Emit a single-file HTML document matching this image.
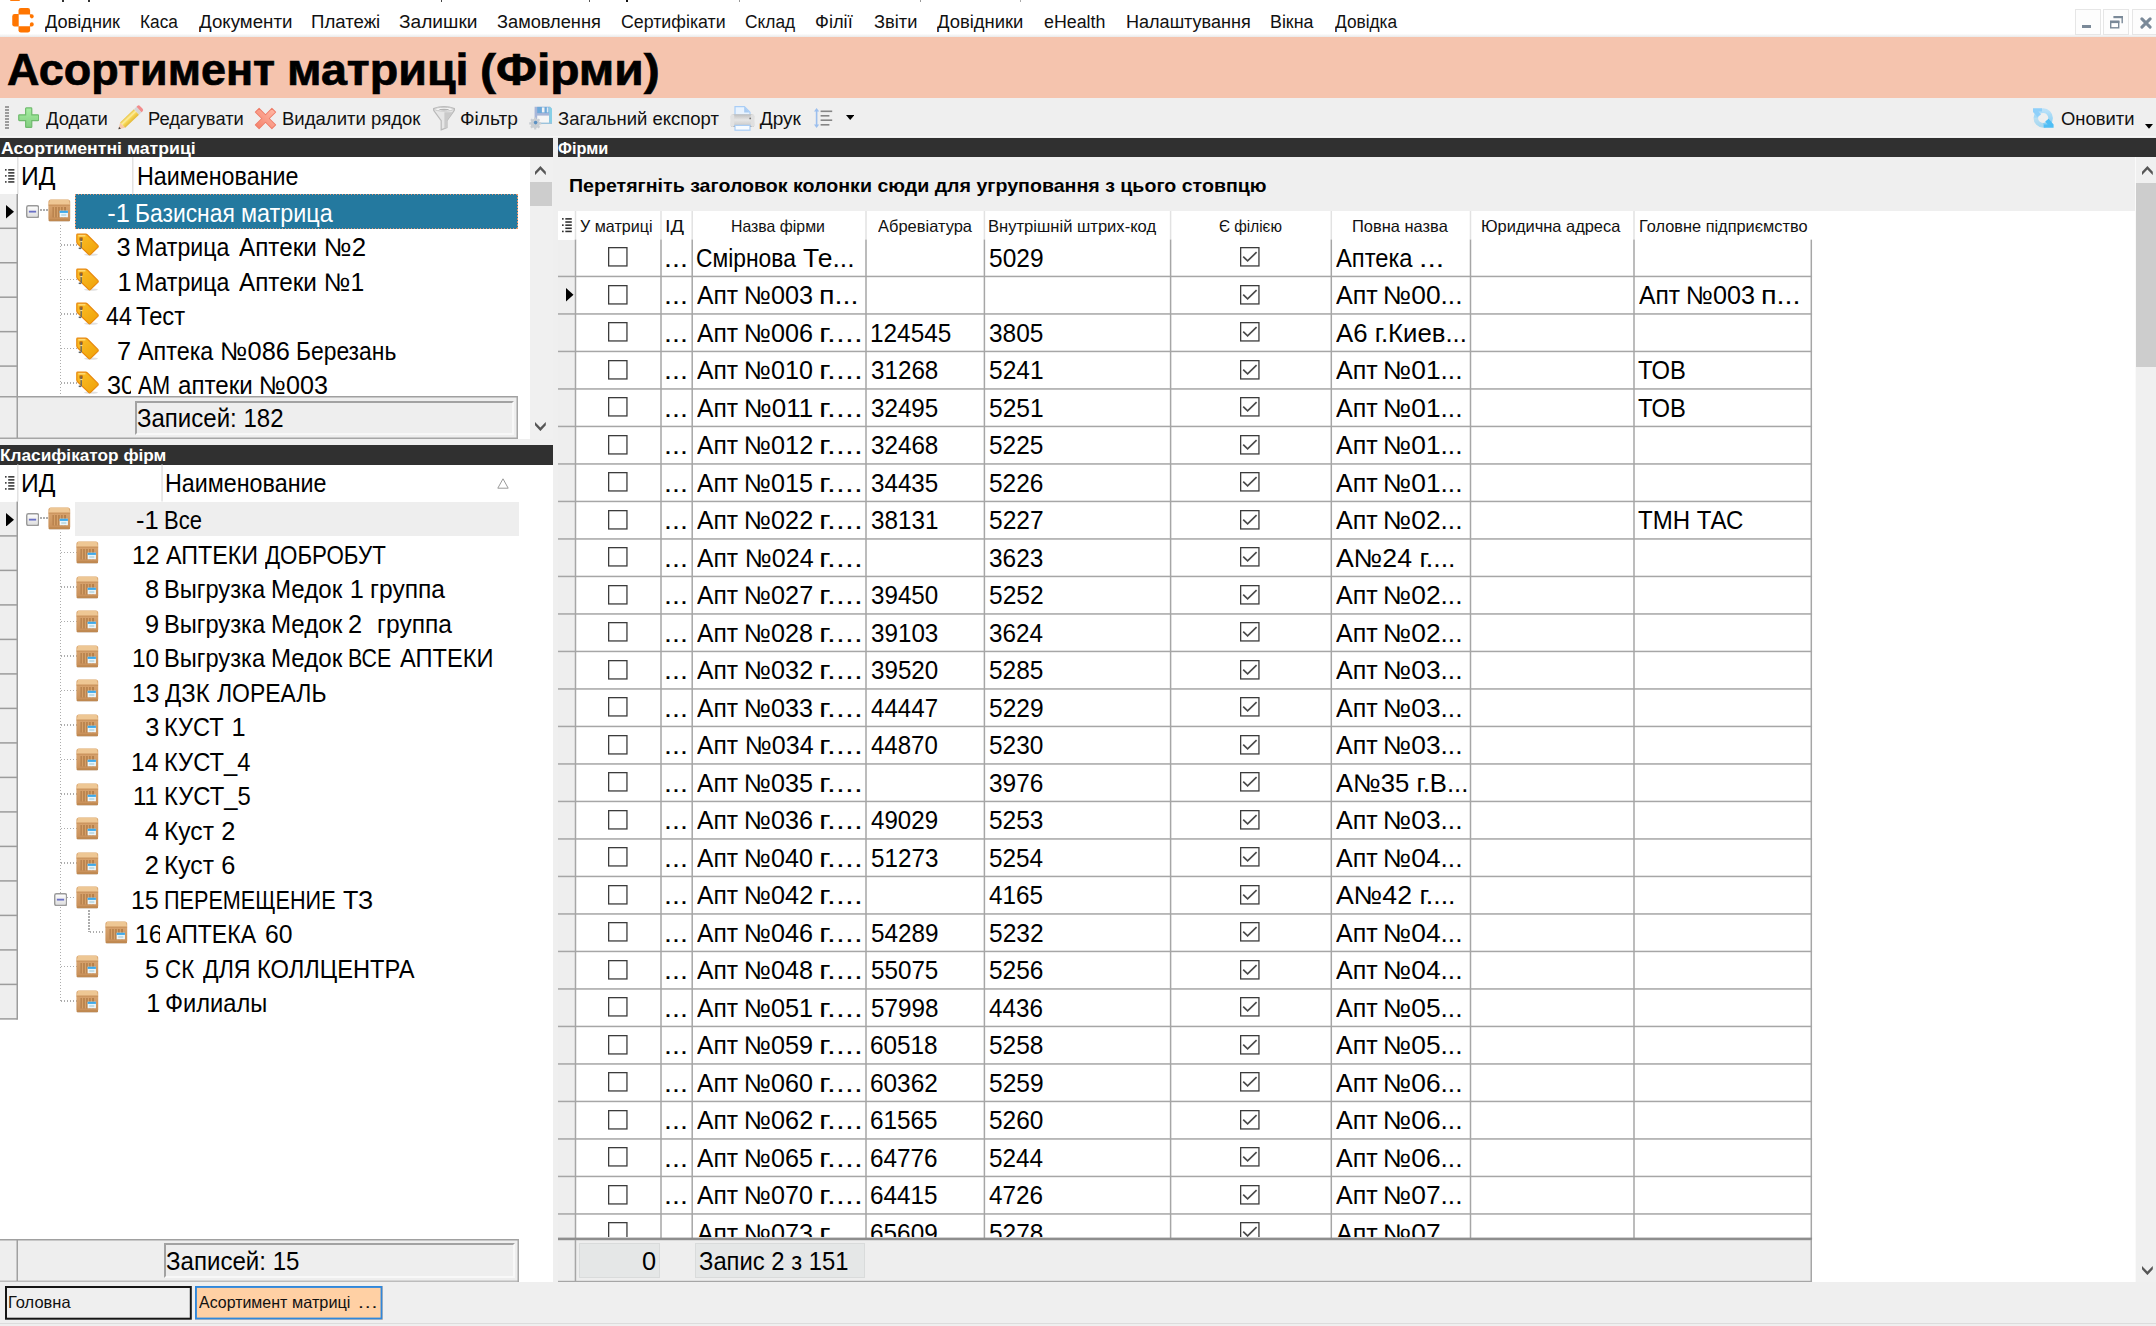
<!DOCTYPE html>
<html lang="uk"><head><meta charset="utf-8"><title>Асортимент матриці (Фірми)</title>
<style>
html,body{margin:0;padding:0}
html{overflow:hidden;width:2156px;height:1326px}
body{width:2156px;height:1326px;overflow:hidden;background:#efefef;position:relative;font-family:"Liberation Sans",sans-serif;}
.b{position:absolute;display:block}
.t{position:absolute;white-space:pre;line-height:1;display:block;transform-origin:0 0}
.c{position:absolute;overflow:hidden;display:block}
</style></head><body>
<svg width="0" height="0" style="position:absolute"><defs>
<linearGradient id="gcr" x1="0" y1="0" x2="0" y2="1"><stop offset="0" stop-color="#dcaa76"/><stop offset="1" stop-color="#c88f58"/></linearGradient>
<linearGradient id="gtag" x1="0" y1="0" x2="1" y2="1"><stop offset="0" stop-color="#fcc02a"/><stop offset="1" stop-color="#eea006"/></linearGradient>
<linearGradient id="gexp" x1="0" y1="0" x2="0" y2="1"><stop offset="0" stop-color="#ffffff"/><stop offset="1" stop-color="#dcdcdc"/></linearGradient>
<linearGradient id="gplus" x1="0" y1="0" x2="0" y2="1"><stop offset="0" stop-color="#a6efa2"/><stop offset="1" stop-color="#82cd80"/></linearGradient>
<linearGradient id="gx" x1="0" y1="0" x2="0" y2="1"><stop offset="0" stop-color="#ffb5a2"/><stop offset="1" stop-color="#f5856f"/></linearGradient>
<linearGradient id="gpr" x1="0" y1="0" x2="0" y2="1"><stop offset="0" stop-color="#bdbdbd"/><stop offset="0.45" stop-color="#e6e6e6"/><stop offset="0.8" stop-color="#d0d0d0"/><stop offset="1" stop-color="#8a8a8a"/></linearGradient>
<linearGradient id="gpen" x1="0" y1="0" x2="0" y2="1"><stop offset="0" stop-color="#e9c33c"/><stop offset="0.35" stop-color="#fdeea0"/><stop offset="0.55" stop-color="#f8d654"/><stop offset="1" stop-color="#e2b838"/></linearGradient>
<linearGradient id="gref" x1="0" y1="0" x2="0" y2="1"><stop offset="0" stop-color="#a9dcfb"/><stop offset="1" stop-color="#5ec2f4"/></linearGradient>
<symbol id="crate" viewBox="0 0 23 23">
 <rect x="1" y="20.6" width="21" height="2.4" rx="1.2" fill="#000" opacity="0.10"/>
 <rect x="0.4" y="0.3" width="22.2" height="22" rx="2.6" fill="url(#gcr)"/>
 <path d="M2.2,0.6 H20.8 L22.4,5.6 H0.6 Z" fill="#eec794"/>
 <rect x="0.6" y="5.6" width="21.8" height="1.1" fill="#c9925b"/>
 <rect x="4.6" y="8" width="13.6" height="10.6" fill="#b37d49"/>
 <path d="M6.6,8 V18.6 M9.6,8 V18.6 M12.6,8 V18.6 M15.6,8 V18.6" stroke="#d6a067" stroke-width="1.5"/>
 <rect x="0.6" y="20.4" width="21.8" height="2" rx="1" fill="#bf8850"/>
 <rect x="11.8" y="11.8" width="8.4" height="6.6" fill="#eef7fb"/>
 <rect x="11.8" y="11.8" width="8.4" height="2.2" fill="#3ea9ea"/>
 <rect x="13.4" y="15" width="5.2" height="2.2" fill="#c3dde6"/>
</symbol>
<symbol id="tag" viewBox="0 0 23 23">
 <ellipse cx="15" cy="21.6" rx="7" ry="1.2" fill="#000" opacity="0.12"/>
 <path d="M1.6,1.2 H9.6 Q10.6,1.2 11.4,2 L21.8,12.4 Q22.6,13.4 21.8,14.4 L14.6,21.4 Q13.6,22.2 12.6,21.4 L1.8,11 Q0.8,10 0.8,9 V2 Q0.8,1.2 1.6,1.2 Z" fill="url(#gtag)" stroke="#e8880c" stroke-width="1.2"/>
 <path d="M2.4,2.8 H9.4" stroke="#ffe08a" stroke-width="1.2"/>
 <rect x="3.4" y="4.2" width="3.4" height="3.6" rx="0.8" fill="#b96a10"/>
 <path d="M5.2,5.4 V14.6 Q4.4,16.4 2.8,14.8" fill="none" stroke="#5d6468" stroke-width="1.3"/>
 <path d="M4.3,8.6 H6.4" stroke="#ffe9a8" stroke-width="1"/>
</symbol>
<symbol id="exp" viewBox="0 0 13.9 13.9">
 <rect x="0.75" y="0.75" width="12.4" height="12.4" rx="1.8" fill="url(#gexp)" stroke="#9a9a9a" stroke-width="1.5"/>
 <rect x="3" y="6" width="7.6" height="1.9" fill="#6a70c4"/>
</symbol>
<symbol id="cb0" viewBox="0 0 20 20">
 <rect x="0.65" y="0.65" width="18.3" height="18.3" fill="#fff" stroke="#3c3c3c" stroke-width="1.3"/>
</symbol>
<symbol id="cb1" viewBox="0 0 20 20">
 <rect x="0.65" y="0.65" width="18.3" height="18.3" fill="#fff" stroke="#3c3c3c" stroke-width="1.3"/>
 <path d="M3.2,9.6 L7.6,13.9 L16.6,5.2" fill="none" stroke="#4a4a4a" stroke-width="1.7"/>
</symbol>
</defs></svg>
<div class="b" style="left:0px;top:0px;width:2156px;height:34px;background:#fff;"></div>
<div class="b" style="left:0px;top:33.5px;width:2156px;height:3.5px;background:linear-gradient(#fdfdfd,#e9e9e9);"></div>
<div class="b" style="left:10px;top:0px;width:10px;height:1px;background:#ff7a0a;border-radius:0 0 3px 3px;"></div>
<div class="b" style="left:62.3px;top:0px;width:1.6px;height:1.6px;background:#333;"></div>
<div class="b" style="left:88.3px;top:0px;width:1.6px;height:1.6px;background:#333;"></div>
<div class="b" style="left:440.6px;top:0px;width:1.6px;height:1.6px;background:#444;"></div>
<div class="b" style="left:588.6px;top:0px;width:1.6px;height:1.6px;background:#555;"></div>
<div class="b" style="left:625.6px;top:0px;width:2.6px;height:1.6px;background:#111;"></div>
<div class="b" style="left:739px;top:0px;width:1.4px;height:1.6px;background:#999;"></div>
<div class="b" style="left:920px;top:0px;width:1.4px;height:1.6px;background:#999;"></div>
<div class="b" style="left:1020px;top:0px;width:1.4px;height:1.6px;background:#aaa;"></div>
<svg class="b" style="left:11.5px;top:8px" width="22" height="25" viewBox="0 0 22 25"><g fill="#ff7500"><path d="M6.5,6.4 V2.4 Q6.5,0.1 8.8,0.1 H15.8 Q18.1,0.1 18.1,2.4 V6.4 Z"/><path d="M6.5,18.3 V22.3 Q6.5,24.6 8.8,24.6 H15.8 Q18.1,24.6 18.1,22.3 V18.3 Z"/><path d="M6.7,6.1 H2.6 Q0.25,6.1 0.25,8.4 V16.3 Q0.25,18.6 2.6,18.6 H6.7 Z"/><path d="M17.9,6.3 H19.8 Q21.7,6.3 21.7,8.2 V8.6 Q21.7,10.4 19.9,10.4 Q18,10.4 17.9,8.6 Z"/><path d="M17.9,18.4 H19.8 Q21.7,18.4 21.7,16.5 V16.1 Q21.7,14.3 19.9,14.3 Q18,14.3 17.9,16.1 Z"/></g></svg>
<span class="t" id="t0" style="left:44.87px;top:12px;font-size:19.026px;transform:scaleX(0.9554);color:#111;">Довідник</span>
<span class="t" id="t1" style="left:140.08px;top:12px;font-size:19.026px;transform:scaleX(0.9082);color:#111;">Каса</span>
<span class="t" id="t2" style="left:198.86px;top:12px;font-size:19.026px;transform:scaleX(0.9837);color:#111;">Документи</span>
<span class="t" id="t3" style="left:310.99px;top:12px;font-size:19.026px;transform:scaleX(0.9792);color:#111;">Платежі</span>
<span class="t" id="t4" style="left:399.37px;top:12px;font-size:19.026px;transform:scaleX(1.0060);color:#111;">Залишки</span>
<span class="t" id="t5" style="left:496.90px;top:12px;font-size:19.026px;transform:scaleX(0.9585);color:#111;">Замовлення</span>
<span class="t" id="t6" style="left:620.60px;top:12px;font-size:19.026px;transform:scaleX(0.9350);color:#111;">Сертифікати</span>
<span class="t" id="t7" style="left:745.12px;top:12px;font-size:19.026px;transform:scaleX(0.9115);color:#111;">Склад</span>
<span class="t" id="t8" style="left:815.45px;top:12px;font-size:19.026px;transform:scaleX(0.9602);color:#111;">Філії</span>
<span class="t" id="t9" style="left:874.40px;top:12px;font-size:19.026px;transform:scaleX(0.9603);color:#111;">Звіти</span>
<span class="t" id="t10" style="left:937.36px;top:12px;font-size:19.026px;transform:scaleX(0.9692);color:#111;">Довідники</span>
<span class="t" id="t11" style="left:1044.24px;top:12px;font-size:19.026px;transform:scaleX(0.9370);color:#111;">eHealth</span>
<span class="t" id="t12" style="left:1125.52px;top:12px;font-size:19.026px;transform:scaleX(0.9490);color:#111;">Налаштування</span>
<span class="t" id="t13" style="left:1269.54px;top:12px;font-size:19.026px;transform:scaleX(0.9385);color:#111;">Вікна</span>
<span class="t" id="t14" style="left:1334.87px;top:12px;font-size:19.026px;transform:scaleX(0.9082);color:#111;">Довідка</span>
<div class="b" style="left:2075px;top:9px;width:25.6px;height:25.5px;background:#fdfdfd;box-sizing:border-box;border:1.3px solid #e6e6e6;"></div>
<div class="b" style="left:2103.4px;top:9px;width:25.6px;height:25.5px;background:#fdfdfd;box-sizing:border-box;border:1.3px solid #e6e6e6;"></div>
<div class="b" style="left:2132px;top:9px;width:24px;height:25.5px;background:#fdfdfd;box-sizing:border-box;border:1.3px solid #e6e6e6;border-right:none;"></div>
<div class="b" style="left:2082px;top:25px;width:9px;height:2.8px;background:#7a8998;"></div>
<svg class="b" style="left:2110px;top:15.6px" width="13" height="13" viewBox="0 0 13 13"><path d="M4,0.6 H12.2 V7.2" fill="none" stroke="#7a8998" stroke-width="1.4"/><rect x="3.4" y="0" width="9.5" height="2.2" fill="#7a8998"/><rect x="0.7" y="5.4" width="8" height="6.4" fill="#fff" stroke="#7a8998" stroke-width="1.4"/><rect x="0" y="4.7" width="9.4" height="2.4" fill="#7a8998"/></svg>
<svg class="b" style="left:2139.5px;top:16.5px" width="12" height="12" viewBox="0 0 12 12"><path d="M1.9,1.9 L10.1,10.1 M10.1,1.9 L1.9,10.1" stroke="#7a8998" stroke-width="3" stroke-linecap="round"/></svg>
<div class="b" style="left:0px;top:37px;width:2156px;height:61px;background:#f5c4ae;"></div>
<span class="t" id="t15" style="left:6.68px;top:47px;font-size:44.8px;transform:scaleX(1.0027);font-weight:bold;-webkit-text-stroke:0.7px #000;">Асортимент</span>
<span class="t" id="t16" style="left:286.74px;top:47px;font-size:44.8px;transform:scaleX(1.0417);font-weight:bold;-webkit-text-stroke:0.7px #000;">матриці</span>
<span class="t" id="t17" style="left:480.11px;top:47px;font-size:44.8px;transform:scaleX(1.0703);font-weight:bold;-webkit-text-stroke:0.7px #000;">(Фірми)</span>
<div class="b" style="left:0px;top:98px;width:2156px;height:40px;background:#efefef;"></div>
<div class="b" style="left:0px;top:136px;width:2156px;height:1px;background:#f6f6f6;"></div>
<div class="b" style="left:4.5px;top:106px;width:4.5px;height:1.5px;background:#9c9c9c;"></div>
<div class="b" style="left:4.5px;top:109px;width:4.5px;height:1.5px;background:#9c9c9c;"></div>
<div class="b" style="left:4.5px;top:112px;width:4.5px;height:1.5px;background:#9c9c9c;"></div>
<div class="b" style="left:4.5px;top:115px;width:4.5px;height:1.5px;background:#9c9c9c;"></div>
<div class="b" style="left:4.5px;top:118px;width:4.5px;height:1.5px;background:#9c9c9c;"></div>
<div class="b" style="left:4.5px;top:121px;width:4.5px;height:1.5px;background:#9c9c9c;"></div>
<div class="b" style="left:4.5px;top:124px;width:4.5px;height:1.5px;background:#9c9c9c;"></div>
<div class="b" style="left:4.5px;top:127px;width:4.5px;height:1.5px;background:#9c9c9c;"></div>
<svg class="b" style="left:17.9px;top:107.4px" width="21.4" height="21.4" viewBox="0 0 23 23"><path d="M9,1 H14 Q14.8,1 14.8,1.8 V8.4 H21.4 Q22.2,8.4 22.2,9.2 V13.8 Q22.2,14.6 21.4,14.6 H14.8 V21.2 Q14.8,22 14,22 H9 Q8.2,22 8.2,21.2 V14.6 H1.6 Q0.8,14.6 0.8,13.8 V9.2 Q0.8,8.4 1.6,8.4 H8.2 V1.8 Q8.2,1 9,1 Z" fill="url(#gplus)" stroke="#6fba6d" stroke-width="1.3"/></svg>
<svg class="b" style="left:114px;top:102px" width="34" height="32" viewBox="0 0 34 32"><g transform="translate(4.4,27.2) rotate(-43.6) scale(0.925,1.06)"><path d="M0,0 L6.4,-3.5 V3.5 Z" fill="#f9c9a8"/><path d="M0,0 L2.4,-1.3 V1.3 Z" fill="#4a4a4a"/><rect x="6.4" y="-3.5" width="20.6" height="7" fill="url(#gpen)"/><rect x="27" y="-3.5" width="3.8" height="7" fill="#d6d6d6"/><path d="M30.8,-3.5 H32.4 Q34.2,-3.5 34.2,-1.6 V1.6 Q34.2,3.5 32.4,3.5 H30.8 Z" fill="#f28c8c"/></g></svg>
<svg class="b" style="left:253.5px;top:106.5px" width="24" height="24" viewBox="0 0 24 24"><g transform="translate(11.5,11.5) rotate(45) scale(0.86)"><path d="M-13.6,-3.1 H-3.1 V-13.6 H3.1 V-3.1 H13.6 V3.1 H3.1 V13.6 H-3.1 V3.1 H-13.6 Z" fill="url(#gx)" stroke="#ee7c68" stroke-width="1.1" stroke-linejoin="round"/></g></svg>
<svg class="b" style="left:432px;top:105px" width="24" height="26" viewBox="0 0 24 26"><path d="M1.6,3.6 Q12,-0.6 22.4,3.6 Q22.6,5.2 21.6,6.4 L15,15.6 V22.6 L9.2,24.8 V15.6 L2.4,6.4 Q1.4,5.2 1.6,3.6 Z" fill="#e6e6e6" stroke="#b9b9b9" stroke-width="1.2"/><path d="M12.4,7.2 H20.6 L15,15.6 V22.4 L12.4,23.4 Z" fill="#c9c9c9"/><ellipse cx="12" cy="4.2" rx="9.4" ry="1.9" fill="#f4f4f4" stroke="#c2c2c2" stroke-width="0.9"/><ellipse cx="12" cy="4.6" rx="5" ry="0.8" fill="#b4b4b4"/></svg>
<svg class="b" style="left:529px;top:105.5px" width="24" height="24" viewBox="0 0 24 24"><path d="M5.6,0.8 H21 L23,2.8 V18 H5.6 Z" fill="#a7b6d8"/><path d="M20.2,0.8 H21 L23,2.8 V18 H20.2 Z" fill="#86cfe6"/><rect x="8.2" y="0.9" width="11.6" height="6.2" fill="#6ea9da"/><rect x="12.9" y="1.4" width="2.6" height="5" fill="#f3f3f3"/><rect x="17.8" y="1.4" width="1.6" height="5" fill="#dfeaf3"/><rect x="8.2" y="9.6" width="11.8" height="7.6" fill="#f6f6f6"/><rect x="8.2" y="16.6" width="14.8" height="1.4" fill="#9cc3dc"/><circle cx="6.2" cy="17.4" r="4.6" fill="#c9ced3"/><path d="M6.2,11.4 V23.4 M0.2,17.4 H12.2 M2,13.2 L10.4,21.6 M10.4,13.2 L2,21.6" stroke="#c9ced3" stroke-width="2.2"/><circle cx="6.6" cy="16.6" r="1.8" fill="#5b90c2"/></svg>
<svg class="b" style="left:730px;top:105.5px" width="25" height="25" viewBox="0 0 25 25"><path d="M5,0.6 H14.4 L20,6.2 V9 H5 Z" fill="#e9f3fe" stroke="#a9cdf6" stroke-width="1.2"/><path d="M14.2,0.8 V6.4 H19.8 Z" fill="#a8cbf2"/><rect x="0.7" y="8.2" width="23.6" height="12.8" rx="2.6" fill="url(#gpr)"/><rect x="0.7" y="8.2" width="3.6" height="12.8" rx="1.8" fill="#e2e2e2"/><rect x="20.7" y="8.2" width="3.6" height="12.8" rx="1.8" fill="#e0e0e0"/><circle cx="20.2" cy="12.4" r="0.9" fill="#777"/><rect x="5" y="19.4" width="15" height="4.8" fill="#f7fbff" stroke="#a9cdf6" stroke-width="1.2"/></svg>
<svg class="b" style="left:813px;top:107px" width="21" height="22" viewBox="0 0 21 22"><path d="M3.6,1 L6.2,4.6 H4.4 V17.4 H6.2 L3.6,21 L1,17.4 H2.8 V4.6 H1 Z" fill="#9cbfee"/><g fill="#858585"><rect x="7.6" y="3.5" width="11.6" height="1.6"/><rect x="7.6" y="8" width="8.8" height="1.6"/><rect x="7.6" y="12.4" width="11.6" height="1.6"/><rect x="7.6" y="17" width="8.8" height="1.6"/></g></svg>
<svg class="b" style="left:845.6px;top:115px" width="8.4" height="5" viewBox="0 0 8.4 5"><path d="M0,0 H8.4 L4.2,5 Z" fill="#000"/></svg>
<svg class="b" style="left:2031.5px;top:107px" width="23" height="22" viewBox="0 0 23 22"><circle cx="11.2" cy="11" r="7.4" fill="none" stroke="url(#gref)" stroke-width="4.6" opacity="0.75"/><path d="M1,1.2 H10 V4.4 H6.4 L9,7.4 L5.6,10 L1,5 Z" fill="#8fd0fa"/><path d="M21.6,20.8 H12 V17.4 H15.8 L13.2,14.4 L16.6,11.8 L21.6,17.4 Z" fill="#4fbef5"/><rect x="0" y="10.6" width="11.2" height="11" fill="#efefef" opacity="0.35"/></svg>
<svg class="b" style="left:2144.8px;top:124px" width="8" height="4.8" viewBox="0 0 8 4.8"><path d="M0,0 H8 L4,4.8 Z" fill="#000"/></svg>
<span class="t" id="t18" style="left:46.36px;top:109px;font-size:19.026px;transform:scaleX(0.9698);color:#111;">Додати</span>
<span class="t" id="t19" style="left:147.50px;top:109px;font-size:19.026px;transform:scaleX(0.9625);color:#111;">Редагувати</span>
<span class="t" id="t20" style="left:282.48px;top:109px;font-size:19.026px;transform:scaleX(0.9751);color:#111;">Видалити рядок</span>
<span class="t" id="t21" style="left:459.90px;top:109px;font-size:19.026px;transform:scaleX(1.0074);color:#111;">Фільтр</span>
<span class="t" id="t22" style="left:558.39px;top:109px;font-size:19.026px;transform:scaleX(0.9721);color:#111;">Загальний експорт</span>
<span class="t" id="t23" style="left:759.86px;top:109px;font-size:19.026px;color:#111;">Друк</span>
<span class="t" id="t24" style="left:2060.63px;top:109px;font-size:19.026px;transform:scaleX(0.9672);color:#111;">Оновити</span>
<div class="b" style="left:0px;top:138px;width:552.5px;height:19px;background:#303030;"></div>
<span class="t" id="t25" style="left:0.56px;top:140px;font-size:16.2px;transform:scaleX(1.0916);font-weight:bold;color:#fff;">Асортиментні матриці</span>
<div class="b" style="left:558px;top:138px;width:1598px;height:19px;background:#303030;"></div>
<span class="t" id="t26" style="left:558.44px;top:140px;font-size:16.2px;transform:scaleX(1.0055);font-weight:bold;color:#fff;">Фірми</span>
<div class="b" style="left:0px;top:445px;width:552.5px;height:19.5px;background:#303030;"></div>
<span class="t" id="t27" style="left:-0.15px;top:447px;font-size:16.2px;transform:scaleX(1.0651);font-weight:bold;color:#fff;">Класифікатор фірм</span>
<div class="b" style="left:0px;top:157px;width:530px;height:282px;background:#fff;"></div>
<div class="b" style="left:529.5px;top:157px;width:23px;height:283px;background:#f0f0f0;"></div>
<div class="b" style="left:529.9px;top:182.4px;width:22.2px;height:23.8px;background:#cdcdcd;"></div>
<svg class="b" style="left:535.4px;top:165.8px" width="10.8" height="9.1" viewBox="0 0 10.8 9.1"><polygon points="0,5.8 5.4,0 10.8,5.8 10.8,9.1 5.4,3.5 0,9.1" fill="#565656"/></svg>
<svg class="b" style="left:535.4px;top:422.4px" width="10.8" height="9.1" viewBox="0 0 10.8 9.1"><polygon points="0,3.3 5.4,9.1 10.8,3.3 10.8,0 5.4,5.6 0,0" fill="#565656"/></svg>
<svg class="b" style="left:4.5px;top:169px" width="10" height="14" viewBox="0 0 10 14"><rect x="3.2" y="0.10" width="6.2" height="1.5" fill="#2e2e2e"/><rect x="0" y="0.10" width="1.6" height="1.5" fill="#2e2e2e"/><rect x="3.2" y="3.12" width="6.2" height="1.5" fill="#2e2e2e"/><rect x="3.2" y="6.14" width="6.2" height="1.5" fill="#2e2e2e"/><rect x="0" y="6.14" width="1.6" height="1.5" fill="#2e2e2e"/><rect x="3.2" y="9.16" width="6.2" height="1.5" fill="#2e2e2e"/><rect x="3.2" y="12.18" width="6.2" height="1.5" fill="#2e2e2e"/><rect x="0" y="12.18" width="1.6" height="1.5" fill="#2e2e2e"/></svg>
<span class="t" id="t28" style="left:20.67px;top:164px;font-size:25.368px;transform:scaleX(0.9740);">ИД</span>
<span class="t" id="t29" style="left:136.59px;top:164px;font-size:25.368px;transform:scaleX(0.9184);">Наименование</span>
<div class="b" style="left:0px;top:194px;width:17px;height:202.5px;background:#eeeeee;"></div>
<svg class="b" style="left:6px;top:205px" width="8" height="13.6" viewBox="0 0 8 13.6"><path d="M0,0 L8,6.8 L0,13.6 Z" fill="#000"/></svg>
<div class="b" style="left:59.85px;top:224.5px;width:1.5px;height:171.5px;background:repeating-linear-gradient(to bottom,#adadad 0,#adadad 1.5px,transparent 1.5px,transparent 3px);"></div>
<div class="b" style="left:61px;top:244.2px;width:16px;height:1.5px;background:repeating-linear-gradient(to right,#adadad 0,#adadad 1.5px,transparent 1.5px,transparent 3px);"></div>
<div class="b" style="left:61px;top:278.65px;width:16px;height:1.5px;background:repeating-linear-gradient(to right,#adadad 0,#adadad 1.5px,transparent 1.5px,transparent 3px);"></div>
<div class="b" style="left:61px;top:313.1px;width:16px;height:1.5px;background:repeating-linear-gradient(to right,#adadad 0,#adadad 1.5px,transparent 1.5px,transparent 3px);"></div>
<div class="b" style="left:61px;top:347.55px;width:16px;height:1.5px;background:repeating-linear-gradient(to right,#adadad 0,#adadad 1.5px,transparent 1.5px,transparent 3px);"></div>
<div class="b" style="left:61px;top:382px;width:16px;height:1.5px;background:repeating-linear-gradient(to right,#adadad 0,#adadad 1.5px,transparent 1.5px,transparent 3px);"></div>
<div class="b" style="left:39.5px;top:209.45px;width:8px;height:1.5px;background:repeating-linear-gradient(to right,#adadad 0,#adadad 1.5px,transparent 1.5px,transparent 3px);"></div>
<svg class="b" style="left:25.6px;top:205.1px" width="13.3" height="13.3"><use href="#exp"/></svg>
<svg class="b" style="left:48px;top:199px" width="22.7" height="22.9"><use href="#crate"/></svg>
<div class="b" style="left:75px;top:194.4px;width:442.5px;height:34.4px;background:#24799f;"></div>
<div class="b" style="left:75px;top:194px;width:442.5px;height:1px;background:repeating-linear-gradient(to right,#e3956f 0,#e3956f 1.5px,transparent 1.5px,transparent 3px);"></div>
<div class="b" style="left:75px;top:228px;width:442.5px;height:1px;background:repeating-linear-gradient(to right,#e3956f 0,#e3956f 1.5px,transparent 1.5px,transparent 3px);"></div>
<div class="b" style="left:75px;top:194.4px;width:1px;height:34.4px;background:repeating-linear-gradient(to bottom,#e3956f 0,#e3956f 1.5px,transparent 1.5px,transparent 3px);"></div>
<div class="b" style="left:517px;top:194.4px;width:1px;height:34.4px;background:repeating-linear-gradient(to bottom,#e3956f 0,#e3956f 1.5px,transparent 1.5px,transparent 3px);"></div>
<span class="t" id="t30" style="left:107.37px;top:201px;font-size:25.368px;color:#fff;">-1</span>
<span class="t" id="t31" style="left:135.43px;top:201px;font-size:25.368px;transform:scaleX(0.9005);color:#fff;">Базисная</span>
<span class="t" id="t32" style="left:240.98px;top:201px;font-size:25.368px;transform:scaleX(0.9218);color:#fff;">матрица</span>
<span class="t" id="t33" style="left:116.43px;top:235px;font-size:25.368px;">3</span>
<span class="t" id="t34" style="left:135.40px;top:235px;font-size:25.368px;transform:scaleX(0.9114);">Матрица</span>
<span class="t" id="t35" style="left:239.45px;top:235px;font-size:25.368px;transform:scaleX(0.9568);">Аптеки</span>
<span class="t" id="t36" style="left:324.13px;top:235px;font-size:25.368px;transform:scaleX(1.0184);">№2</span>
<svg class="b" style="left:75.8px;top:233.45px" width="23" height="23"><use href="#tag"/></svg>
<span class="t" id="t37" style="left:117.57px;top:270px;font-size:25.368px;">1</span>
<span class="t" id="t38" style="left:135.40px;top:270px;font-size:25.368px;transform:scaleX(0.9114);">Матрица</span>
<span class="t" id="t39" style="left:239.45px;top:270px;font-size:25.368px;transform:scaleX(0.9568);">Аптеки</span>
<span class="t" id="t40" style="left:324.23px;top:270px;font-size:25.368px;transform:scaleX(0.9750);">№1</span>
<svg class="b" style="left:75.8px;top:267.9px" width="23" height="23"><use href="#tag"/></svg>
<span class="t" id="t41" style="left:105.97px;top:304px;font-size:25.368px;transform:scaleX(0.9147);">44</span>
<span class="t" id="t42" style="left:136.47px;top:304px;font-size:25.368px;transform:scaleX(0.9346);">Тест</span>
<svg class="b" style="left:75.8px;top:302.35px" width="23" height="23"><use href="#tag"/></svg>
<span class="t" id="t43" style="left:117.00px;top:339px;font-size:25.368px;">7</span>
<span class="t" id="t44" style="left:138.05px;top:339px;font-size:25.368px;transform:scaleX(0.9206);">Аптека</span>
<span class="t" id="t45" style="left:220.37px;top:339px;font-size:25.368px;">№086</span>
<span class="t" id="t46" style="left:295.73px;top:339px;font-size:25.368px;transform:scaleX(0.9009);">Березань</span>
<svg class="b" style="left:75.8px;top:336.8px" width="23" height="23"><use href="#tag"/></svg>
<div class="c" style="left:100px;top:360px;width:31.3px;height:36.5px"><span class="t" id="t47" style="left:6.54px;top:13px;font-size:25.368px;transform:scaleX(0.9938);">30</span></div>
<div class="c" style="left:132px;top:360px;width:390px;height:36.5px"><span class="t" id="t48" style="left:6.06px;top:13px;font-size:25.368px;transform:scaleX(0.8436);">АМ</span></div>
<div class="c" style="left:132px;top:360px;width:390px;height:36.5px"><span class="t" id="t49" style="left:46.47px;top:13px;font-size:25.368px;transform:scaleX(0.9512);">аптеки</span></div>
<div class="c" style="left:132px;top:360px;width:390px;height:36.5px"><span class="t" id="t50" style="left:127.29px;top:13px;font-size:25.368px;transform:scaleX(0.9913);">№003</span></div>
<svg class="b" style="left:75.8px;top:371.25px" width="23" height="23"><use href="#tag"/></svg>
<div class="b" style="left:0px;top:396.5px;width:517.5px;height:42px;background:#eeeeee;"></div>
<div class="b" style="left:135px;top:401px;width:379px;height:33.5px;box-sizing:border-box;border:2px solid;border-color:#a2a2a2 #f8f8f8 #f8f8f8 #a2a2a2;"></div>
<span class="t" id="t51" style="left:137.11px;top:406px;font-size:25.368px;transform:scaleX(0.9471);">Записей: 182</span>
<svg class="b" style="left:0;top:0" width="2156" height="1326"><rect x="17" y="157" width="1.5" height="37" fill="#e2e2e2"/><rect x="132" y="157" width="1.5" height="37" fill="#e2e2e2"/><rect x="16.5" y="194" width="1.5" height="202.5" fill="#9c9c9c"/><rect x="0" y="227.55" width="17" height="1.5" fill="#9c9c9c"/><rect x="0" y="262" width="17" height="1.5" fill="#9c9c9c"/><rect x="0" y="296.45" width="17" height="1.5" fill="#9c9c9c"/><rect x="0" y="330.9" width="17" height="1.5" fill="#9c9c9c"/><rect x="0" y="365.35" width="17" height="1.5" fill="#9c9c9c"/><rect x="0" y="396" width="518" height="1.5" fill="#a0a0a0"/><rect x="0" y="437.5" width="518" height="1.5" fill="#a6a6a6"/><rect x="16.5" y="396" width="1.5" height="42" fill="#a0a0a0"/><rect x="516.5" y="396" width="1.5" height="43" fill="#a6a6a6"/></svg>
<div class="b" style="left:0px;top:439px;width:552.5px;height:6px;background:#efefef;"></div>
<div class="b" style="left:0px;top:464.5px;width:553px;height:817px;background:#fff;"></div>
<svg class="b" style="left:4.5px;top:476px" width="10" height="14" viewBox="0 0 10 14"><rect x="3.2" y="0.10" width="6.2" height="1.5" fill="#2e2e2e"/><rect x="0" y="0.10" width="1.6" height="1.5" fill="#2e2e2e"/><rect x="3.2" y="3.12" width="6.2" height="1.5" fill="#2e2e2e"/><rect x="3.2" y="6.14" width="6.2" height="1.5" fill="#2e2e2e"/><rect x="0" y="6.14" width="1.6" height="1.5" fill="#2e2e2e"/><rect x="3.2" y="9.16" width="6.2" height="1.5" fill="#2e2e2e"/><rect x="3.2" y="12.18" width="6.2" height="1.5" fill="#2e2e2e"/><rect x="0" y="12.18" width="1.6" height="1.5" fill="#2e2e2e"/></svg>
<span class="t" id="t52" style="left:20.67px;top:471px;font-size:25.368px;transform:scaleX(0.9740);">ИД</span>
<span class="t" id="t53" style="left:164.89px;top:471px;font-size:25.368px;transform:scaleX(0.9184);">Наименование</span>
<svg class="b" style="left:497px;top:477.5px" width="12" height="11" viewBox="0 0 12 11"><path d="M6,0.8 L11.2,10.2 H0.8 Z" fill="none" stroke="#9a9a9a" stroke-width="1"/></svg>
<div class="b" style="left:0px;top:501.55px;width:17px;height:517.5px;background:#eeeeee;"></div>
<svg class="b" style="left:6px;top:512.7px" width="8" height="13.6" viewBox="0 0 8 13.6"><path d="M0,0 L8,6.8 L0,13.6 Z" fill="#000"/></svg>
<div class="b" style="left:75px;top:502.2px;width:444px;height:34px;background:#eeeeee;"></div>
<div class="b" style="left:59.85px;top:532px;width:1.5px;height:468.85px;background:repeating-linear-gradient(to bottom,#adadad 0,#adadad 1.5px,transparent 1.5px,transparent 3px);"></div>
<div class="b" style="left:61px;top:551.6px;width:16px;height:1.5px;background:repeating-linear-gradient(to right,#adadad 0,#adadad 1.5px,transparent 1.5px,transparent 3px);"></div>
<div class="b" style="left:61px;top:586.1px;width:16px;height:1.5px;background:repeating-linear-gradient(to right,#adadad 0,#adadad 1.5px,transparent 1.5px,transparent 3px);"></div>
<div class="b" style="left:61px;top:620.6px;width:16px;height:1.5px;background:repeating-linear-gradient(to right,#adadad 0,#adadad 1.5px,transparent 1.5px,transparent 3px);"></div>
<div class="b" style="left:61px;top:655.1px;width:16px;height:1.5px;background:repeating-linear-gradient(to right,#adadad 0,#adadad 1.5px,transparent 1.5px,transparent 3px);"></div>
<div class="b" style="left:61px;top:689.6px;width:16px;height:1.5px;background:repeating-linear-gradient(to right,#adadad 0,#adadad 1.5px,transparent 1.5px,transparent 3px);"></div>
<div class="b" style="left:61px;top:724.1px;width:16px;height:1.5px;background:repeating-linear-gradient(to right,#adadad 0,#adadad 1.5px,transparent 1.5px,transparent 3px);"></div>
<div class="b" style="left:61px;top:758.6px;width:16px;height:1.5px;background:repeating-linear-gradient(to right,#adadad 0,#adadad 1.5px,transparent 1.5px,transparent 3px);"></div>
<div class="b" style="left:61px;top:793.1px;width:16px;height:1.5px;background:repeating-linear-gradient(to right,#adadad 0,#adadad 1.5px,transparent 1.5px,transparent 3px);"></div>
<div class="b" style="left:61px;top:827.6px;width:16px;height:1.5px;background:repeating-linear-gradient(to right,#adadad 0,#adadad 1.5px,transparent 1.5px,transparent 3px);"></div>
<div class="b" style="left:61px;top:862.1px;width:16px;height:1.5px;background:repeating-linear-gradient(to right,#adadad 0,#adadad 1.5px,transparent 1.5px,transparent 3px);"></div>
<div class="b" style="left:61px;top:896.6px;width:13px;height:1.5px;background:repeating-linear-gradient(to right,#adadad 0,#adadad 1.5px,transparent 1.5px,transparent 3px);"></div>
<div class="b" style="left:61px;top:965.6px;width:16px;height:1.5px;background:repeating-linear-gradient(to right,#adadad 0,#adadad 1.5px,transparent 1.5px,transparent 3px);"></div>
<div class="b" style="left:61px;top:1000.1px;width:16px;height:1.5px;background:repeating-linear-gradient(to right,#adadad 0,#adadad 1.5px,transparent 1.5px,transparent 3px);"></div>
<div class="b" style="left:39.5px;top:517.1px;width:8px;height:1.5px;background:repeating-linear-gradient(to right,#adadad 0,#adadad 1.5px,transparent 1.5px,transparent 3px);"></div>
<div class="b" style="left:88.25px;top:909.55px;width:1.5px;height:22px;background:repeating-linear-gradient(to bottom,#adadad 0,#adadad 1.5px,transparent 1.5px,transparent 3px);"></div>
<div class="b" style="left:89.5px;top:931.1px;width:15px;height:1.5px;background:repeating-linear-gradient(to right,#adadad 0,#adadad 1.5px,transparent 1.5px,transparent 3px);"></div>
<svg class="b" style="left:25.6px;top:513.15px" width="13.3" height="13.3"><use href="#exp"/></svg>
<svg class="b" style="left:54.1px;top:892.65px" width="13.3" height="13.3"><use href="#exp"/></svg>
<svg class="b" style="left:47.9px;top:506.65px" width="22.7" height="22.9"><use href="#crate"/></svg>
<span class="t" id="t54" style="left:135.77px;top:508px;font-size:25.368px;transform:scaleX(1.0051);">-1</span>
<span class="t" id="t55" style="left:164.10px;top:508px;font-size:25.368px;transform:scaleX(0.8668);">Все</span>
<svg class="b" style="left:76.4px;top:541.15px" width="22.7" height="22.9"><use href="#crate"/></svg>
<span class="t" id="t56" style="left:131.61px;top:543px;font-size:25.368px;transform:scaleX(0.9756);">12</span>
<span class="t" id="t57" style="left:165.85px;top:543px;font-size:25.368px;transform:scaleX(0.9181);">АПТЕКИ</span>
<span class="t" id="t58" style="left:265.44px;top:543px;font-size:25.368px;transform:scaleX(0.8797);">ДОБРОБУТ</span>
<svg class="b" style="left:76.4px;top:575.65px" width="22.7" height="22.9"><use href="#crate"/></svg>
<span class="t" id="t59" style="left:145.00px;top:577px;font-size:25.368px;">8</span>
<span class="t" id="t60" style="left:163.96px;top:577px;font-size:25.368px;transform:scaleX(0.9341);">Выгрузка</span>
<span class="t" id="t61" style="left:271.02px;top:577px;font-size:25.368px;transform:scaleX(0.9494);">Медок</span>
<span class="t" id="t62" style="left:349.87px;top:577px;font-size:25.368px;">1</span>
<span class="t" id="t63" style="left:369.79px;top:577px;font-size:25.368px;transform:scaleX(0.9700);">группа</span>
<svg class="b" style="left:76.4px;top:610.15px" width="22.7" height="22.9"><use href="#crate"/></svg>
<span class="t" id="t64" style="left:144.91px;top:612px;font-size:25.368px;">9</span>
<span class="t" id="t65" style="left:163.96px;top:612px;font-size:25.368px;transform:scaleX(0.9341);">Выгрузка</span>
<span class="t" id="t66" style="left:271.02px;top:612px;font-size:25.368px;transform:scaleX(0.9494);">Медок</span>
<span class="t" id="t67" style="left:348.02px;top:612px;font-size:25.368px;">2</span>
<span class="t" id="t68" style="left:377.19px;top:612px;font-size:25.368px;transform:scaleX(0.9700);">группа</span>
<svg class="b" style="left:76.4px;top:644.65px" width="22.7" height="22.9"><use href="#crate"/></svg>
<span class="t" id="t69" style="left:131.64px;top:646px;font-size:25.368px;transform:scaleX(0.9646);">10</span>
<span class="t" id="t70" style="left:163.96px;top:646px;font-size:25.368px;transform:scaleX(0.9341);">Выгрузка</span>
<span class="t" id="t71" style="left:271.02px;top:646px;font-size:25.368px;transform:scaleX(0.9494);">Медок</span>
<span class="t" id="t72" style="left:347.95px;top:646px;font-size:25.368px;transform:scaleX(0.8433);">ВСЕ</span>
<span class="t" id="t73" style="left:399.55px;top:646px;font-size:25.368px;transform:scaleX(0.9314);">АПТЕКИ</span>
<svg class="b" style="left:76.4px;top:679.15px" width="22.7" height="22.9"><use href="#crate"/></svg>
<span class="t" id="t74" style="left:131.63px;top:681px;font-size:25.368px;transform:scaleX(0.9693);">13</span>
<span class="t" id="t75" style="left:164.82px;top:681px;font-size:25.368px;transform:scaleX(0.9439);">ДЗК</span>
<span class="t" id="t76" style="left:217.40px;top:681px;font-size:25.368px;transform:scaleX(0.9052);">ЛОРЕАЛЬ</span>
<svg class="b" style="left:76.4px;top:713.65px" width="22.7" height="22.9"><use href="#crate"/></svg>
<span class="t" id="t77" style="left:145.13px;top:715px;font-size:25.368px;">3</span>
<span class="t" id="t78" style="left:163.96px;top:715px;font-size:25.368px;transform:scaleX(0.9304);">КУСТ</span>
<span class="t" id="t79" style="left:231.57px;top:715px;font-size:25.368px;">1</span>
<svg class="b" style="left:76.4px;top:748.15px" width="22.7" height="22.9"><use href="#crate"/></svg>
<span class="t" id="t80" style="left:131.43px;top:750px;font-size:25.368px;transform:scaleX(0.9670);">14</span>
<span class="t" id="t81" style="left:164.05px;top:750px;font-size:25.368px;transform:scaleX(0.9361);">КУСТ_4</span>
<svg class="b" style="left:76.4px;top:782.65px" width="22.7" height="22.9"><use href="#crate"/></svg>
<span class="t" id="t82" style="left:132.66px;top:784px;font-size:25.368px;transform:scaleX(0.9500);">11</span>
<span class="t" id="t83" style="left:164.04px;top:784px;font-size:25.368px;transform:scaleX(0.9395);">КУСТ_5</span>
<svg class="b" style="left:76.4px;top:817.15px" width="22.7" height="22.9"><use href="#crate"/></svg>
<span class="t" id="t84" style="left:144.72px;top:819px;font-size:25.368px;">4</span>
<span class="t" id="t85" style="left:163.98px;top:819px;font-size:25.368px;transform:scaleX(0.9703);">Куст</span>
<span class="t" id="t86" style="left:221.32px;top:819px;font-size:25.368px;">2</span>
<svg class="b" style="left:76.4px;top:851.65px" width="22.7" height="22.9"><use href="#crate"/></svg>
<span class="t" id="t87" style="left:144.72px;top:853px;font-size:25.368px;">2</span>
<span class="t" id="t88" style="left:163.98px;top:853px;font-size:25.368px;transform:scaleX(0.9703);">Куст</span>
<span class="t" id="t89" style="left:221.31px;top:853px;font-size:25.368px;">6</span>
<svg class="b" style="left:76.4px;top:886.15px" width="22.7" height="22.9"><use href="#crate"/></svg>
<span class="t" id="t90" style="left:131.41px;top:888px;font-size:25.368px;transform:scaleX(0.9793);">15</span>
<span class="t" id="t91" style="left:164.25px;top:888px;font-size:25.368px;transform:scaleX(0.8530);">ПЕРЕМЕЩЕНИЕ</span>
<span class="t" id="t92" style="left:342.73px;top:888px;font-size:25.368px;transform:scaleX(0.9927);">ТЗ</span>
<svg class="b" style="left:104.9px;top:920.65px" width="22.7" height="22.9"><use href="#crate"/></svg>
<div class="c" style="left:128px;top:915.55px;width:31.6px;height:34.5px"><span class="t" id="t93" style="left:6.67px;top:6.45px;font-size:25.368px;">16</span></div>
<span class="t" id="t94" style="left:166.35px;top:922px;font-size:25.368px;transform:scaleX(0.9104);">АПТЕКА</span>
<span class="t" id="t95" style="left:265.04px;top:922px;font-size:25.368px;transform:scaleX(0.9753);">60</span>
<svg class="b" style="left:76.4px;top:955.15px" width="22.7" height="22.9"><use href="#crate"/></svg>
<span class="t" id="t96" style="left:144.98px;top:957px;font-size:25.368px;">5</span>
<span class="t" id="t97" style="left:164.86px;top:957px;font-size:25.368px;transform:scaleX(0.8813);">СК</span>
<span class="t" id="t98" style="left:202.73px;top:957px;font-size:25.368px;transform:scaleX(0.9101);">ДЛЯ</span>
<span class="t" id="t99" style="left:256.56px;top:957px;font-size:25.368px;transform:scaleX(0.9328);">КОЛЛЦЕНТРА</span>
<svg class="b" style="left:76.4px;top:989.65px" width="22.7" height="22.9"><use href="#crate"/></svg>
<span class="t" id="t100" style="left:146.37px;top:991px;font-size:25.368px;">1</span>
<span class="t" id="t101" style="left:164.64px;top:991px;font-size:25.368px;transform:scaleX(0.9330);">Филиалы</span>
<div class="b" style="left:0px;top:1239.5px;width:518.5px;height:42px;background:#eeeeee;"></div>
<div class="b" style="left:164px;top:1243px;width:351px;height:35px;box-sizing:border-box;border:2px solid;border-color:#a2a2a2 #f8f8f8 #f8f8f8 #a2a2a2;"></div>
<span class="t" id="t102" style="left:165.51px;top:1249px;font-size:25.368px;transform:scaleX(0.9496);">Записей: 15</span>
<svg class="b" style="left:0;top:0" width="2156" height="1326"><rect x="17" y="464.5" width="1.5" height="37" fill="#e2e2e2"/><rect x="161.3" y="464.5" width="1.5" height="37" fill="#e2e2e2"/><rect x="16.5" y="501.55" width="1.5" height="518.2" fill="#9c9c9c"/><rect x="0" y="535.15" width="17" height="1.5" fill="#9c9c9c"/><rect x="0" y="569.65" width="17" height="1.5" fill="#9c9c9c"/><rect x="0" y="604.15" width="17" height="1.5" fill="#9c9c9c"/><rect x="0" y="638.65" width="17" height="1.5" fill="#9c9c9c"/><rect x="0" y="673.15" width="17" height="1.5" fill="#9c9c9c"/><rect x="0" y="707.65" width="17" height="1.5" fill="#9c9c9c"/><rect x="0" y="742.15" width="17" height="1.5" fill="#9c9c9c"/><rect x="0" y="776.65" width="17" height="1.5" fill="#9c9c9c"/><rect x="0" y="811.15" width="17" height="1.5" fill="#9c9c9c"/><rect x="0" y="845.65" width="17" height="1.5" fill="#9c9c9c"/><rect x="0" y="880.15" width="17" height="1.5" fill="#9c9c9c"/><rect x="0" y="914.65" width="17" height="1.5" fill="#9c9c9c"/><rect x="0" y="949.15" width="17" height="1.5" fill="#9c9c9c"/><rect x="0" y="983.65" width="17" height="1.5" fill="#9c9c9c"/><rect x="0" y="1018.15" width="17" height="1.5" fill="#9c9c9c"/><rect x="0" y="1239" width="519" height="1.5" fill="#a0a0a0"/><rect x="0" y="1280.5" width="519" height="1.5" fill="#bcbcbc"/><rect x="16.5" y="1239" width="1.5" height="42" fill="#a0a0a0"/><rect x="517.5" y="1239" width="1.5" height="43" fill="#a6a6a6"/></svg>
<div class="b" style="left:558px;top:157px;width:1577px;height:54px;background:#efefef;"></div>
<span class="t" id="t103" style="left:569.19px;top:178px;font-size:17.9px;transform:scaleX(1.0952);font-weight:bold;">Перетягніть заголовок колонки сюди для угруповання з цього стовпцю</span>
<div class="b" style="left:558px;top:211px;width:1577px;height:1071.5px;background:#fff;"></div>
<div class="b" style="left:2135px;top:157px;width:21px;height:1125.5px;background:#f0f0f0;"></div>
<div class="b" style="left:2134.6px;top:157px;width:1.4px;height:1125.5px;background:#fafafa;"></div>
<div class="b" style="left:2136px;top:182.6px;width:20px;height:184.4px;background:#cdcdcd;"></div>
<svg class="b" style="left:2141.8px;top:166px" width="10.8" height="9.1" viewBox="0 0 10.8 9.1"><polygon points="0,5.8 5.4,0 10.8,5.8 10.8,9.1 5.4,3.5 0,9.1" fill="#565656"/></svg>
<svg class="b" style="left:2141.8px;top:1266px" width="10.8" height="9.1" viewBox="0 0 10.8 9.1"><polygon points="0,3.3 5.4,9.1 10.8,3.3 10.8,0 5.4,5.6 0,0" fill="#565656"/></svg>
<svg class="b" style="left:562.2px;top:218.2px" width="10.4" height="14.56" viewBox="0 0 10 14"><rect x="3.2" y="0.10" width="6.2" height="1.5" fill="#2e2e2e"/><rect x="0" y="0.10" width="1.6" height="1.5" fill="#2e2e2e"/><rect x="3.2" y="3.12" width="6.2" height="1.5" fill="#2e2e2e"/><rect x="3.2" y="6.14" width="6.2" height="1.5" fill="#2e2e2e"/><rect x="0" y="6.14" width="1.6" height="1.5" fill="#2e2e2e"/><rect x="3.2" y="9.16" width="6.2" height="1.5" fill="#2e2e2e"/><rect x="3.2" y="12.18" width="6.2" height="1.5" fill="#2e2e2e"/><rect x="0" y="12.18" width="1.6" height="1.5" fill="#2e2e2e"/></svg>
<span class="t" id="t104" style="left:580.07px;top:219px;font-size:16.912px;transform:scaleX(0.9526);color:#111;">У матриці</span>
<span class="t" id="t105" style="left:664.55px;top:219px;font-size:16.912px;transform:scaleX(1.1833);color:#111;">ІД</span>
<span class="t" id="t106" style="left:731.20px;top:219px;font-size:16.912px;transform:scaleX(0.9371);color:#111;">Назва фірми</span>
<span class="t" id="t107" style="left:878.47px;top:219px;font-size:16.912px;transform:scaleX(0.9740);color:#111;">Абревіатура</span>
<span class="t" id="t108" style="left:988.14px;top:219px;font-size:16.912px;transform:scaleX(0.9805);color:#111;">Внутрішній штрих-код</span>
<span class="t" id="t109" style="left:1218.72px;top:219px;font-size:16.912px;transform:scaleX(0.9060);color:#111;">Є філією</span>
<span class="t" id="t110" style="left:1352.17px;top:219px;font-size:16.912px;transform:scaleX(0.9732);color:#111;">Повна назва</span>
<span class="t" id="t111" style="left:1481.15px;top:219px;font-size:16.912px;transform:scaleX(0.9717);color:#111;">Юридична адреса</span>
<span class="t" id="t112" style="left:1638.66px;top:219px;font-size:16.912px;transform:scaleX(0.9666);color:#111;">Головне підприємство</span>
<div class="b" style="left:558px;top:239.65px;width:17.5px;height:998.15px;background:#eeeeee;"></div>
<svg class="b" style="left:566px;top:288.3px" width="7.5" height="13.6" viewBox="0 0 7.5 13.6"><path d="M0,0 L7.5,6.8 L0,13.6 Z" fill="#000"/></svg>
<svg class="b" style="left:607.5px;top:247.25px" width="20" height="20"><use href="#cb0"/></svg>
<svg class="b" style="left:1240.3px;top:247.25px" width="20" height="20"><use href="#cb1"/></svg>
<span class="t" id="t113" style="left:663.69px;top:246px;font-size:25.368px;transform:scaleX(1.1267);">...</span>
<span class="t" id="t114" style="left:695.64px;top:246px;font-size:25.368px;transform:scaleX(0.9005);">Смірнова</span>
<span class="t" id="t115" style="left:803.30px;top:246px;font-size:25.368px;transform:scaleX(1.0447);">Те...</span>
<span class="t" id="t116" style="left:988.52px;top:246px;font-size:25.368px;transform:scaleX(0.9667);">5029</span>
<span class="t" id="t117" style="left:1335.75px;top:246px;font-size:25.368px;transform:scaleX(0.9353);">Аптека</span>
<span class="t" id="t118" style="left:1419.04px;top:246px;font-size:25.368px;transform:scaleX(1.1934);">...</span>
<svg class="b" style="left:607.5px;top:284.75px" width="20" height="20"><use href="#cb0"/></svg>
<svg class="b" style="left:1240.3px;top:284.75px" width="20" height="20"><use href="#cb1"/></svg>
<span class="t" id="t119" style="left:663.69px;top:283px;font-size:25.368px;transform:scaleX(1.1267);">...</span>
<span class="t" id="t120" style="left:697.05px;top:283px;font-size:25.368px;transform:scaleX(0.9717);">Апт</span>
<span class="t" id="t121" style="left:744.49px;top:283px;font-size:25.368px;transform:scaleX(0.9929);">№003</span>
<span class="t" id="t122" style="left:819.11px;top:283px;font-size:25.368px;transform:scaleX(1.1331);">п...</span>
<span class="t" id="t123" style="left:1335.75px;top:283px;font-size:25.368px;transform:scaleX(0.9861);">Апт</span>
<span class="t" id="t124" style="left:1382.68px;top:283px;font-size:25.368px;transform:scaleX(1.0387);">№00...</span>
<span class="t" id="t125" style="left:1638.75px;top:283px;font-size:25.368px;transform:scaleX(0.9717);">Апт</span>
<span class="t" id="t126" style="left:1686.19px;top:283px;font-size:25.368px;transform:scaleX(0.9929);">№003</span>
<span class="t" id="t127" style="left:1760.80px;top:283px;font-size:25.368px;transform:scaleX(1.1364);">п...</span>
<svg class="b" style="left:607.5px;top:322.25px" width="20" height="20"><use href="#cb0"/></svg>
<svg class="b" style="left:1240.3px;top:322.25px" width="20" height="20"><use href="#cb1"/></svg>
<span class="t" id="t128" style="left:663.69px;top:321px;font-size:25.368px;transform:scaleX(1.1267);">...</span>
<span class="t" id="t129" style="left:697.05px;top:321px;font-size:25.368px;transform:scaleX(0.9717);">Апт</span>
<span class="t" id="t130" style="left:744.49px;top:321px;font-size:25.368px;transform:scaleX(0.9929);">№006</span>
<span class="t" id="t131" style="left:818.90px;top:321px;font-size:25.368px;letter-spacing:0.173px;transform:scaleX(1.2500);">г....</span>
<span class="t" id="t132" style="left:869.64px;top:321px;font-size:25.368px;transform:scaleX(0.9614);">124545</span>
<span class="t" id="t133" style="left:988.57px;top:321px;font-size:25.368px;transform:scaleX(0.9634);">3805</span>
<span class="t" id="t134" style="left:1335.75px;top:321px;font-size:25.368px;transform:scaleX(1.0154);">А6 г.Киев...</span>
<svg class="b" style="left:607.5px;top:359.75px" width="20" height="20"><use href="#cb0"/></svg>
<svg class="b" style="left:1240.3px;top:359.75px" width="20" height="20"><use href="#cb1"/></svg>
<span class="t" id="t135" style="left:663.69px;top:358px;font-size:25.368px;transform:scaleX(1.1267);">...</span>
<span class="t" id="t136" style="left:697.05px;top:358px;font-size:25.368px;transform:scaleX(0.9717);">Апт</span>
<span class="t" id="t137" style="left:744.49px;top:358px;font-size:25.368px;transform:scaleX(0.9910);">№010</span>
<span class="t" id="t138" style="left:818.90px;top:358px;font-size:25.368px;letter-spacing:0.173px;transform:scaleX(1.2500);">г....</span>
<span class="t" id="t139" style="left:870.58px;top:358px;font-size:25.368px;transform:scaleX(0.9545);">31268</span>
<span class="t" id="t140" style="left:988.52px;top:358px;font-size:25.368px;transform:scaleX(0.9674);">5241</span>
<span class="t" id="t141" style="left:1335.75px;top:358px;font-size:25.368px;transform:scaleX(0.9861);">Апт</span>
<span class="t" id="t142" style="left:1382.68px;top:358px;font-size:25.368px;transform:scaleX(1.0387);">№01...</span>
<span class="t" id="t143" style="left:1638.27px;top:358px;font-size:25.368px;transform:scaleX(0.9370);">ТОВ</span>
<svg class="b" style="left:607.5px;top:397.25px" width="20" height="20"><use href="#cb0"/></svg>
<svg class="b" style="left:1240.3px;top:397.25px" width="20" height="20"><use href="#cb1"/></svg>
<span class="t" id="t144" style="left:663.69px;top:396px;font-size:25.368px;transform:scaleX(1.1267);">...</span>
<span class="t" id="t145" style="left:697.05px;top:396px;font-size:25.368px;transform:scaleX(0.9717);">Апт</span>
<span class="t" id="t146" style="left:744.42px;top:396px;font-size:25.368px;transform:scaleX(1.0238);">№011</span>
<span class="t" id="t147" style="left:818.90px;top:396px;font-size:25.368px;letter-spacing:0.173px;transform:scaleX(1.2500);">г....</span>
<span class="t" id="t148" style="left:870.58px;top:396px;font-size:25.368px;transform:scaleX(0.9540);">32495</span>
<span class="t" id="t149" style="left:988.52px;top:396px;font-size:25.368px;transform:scaleX(0.9674);">5251</span>
<span class="t" id="t150" style="left:1335.75px;top:396px;font-size:25.368px;transform:scaleX(0.9861);">Апт</span>
<span class="t" id="t151" style="left:1382.68px;top:396px;font-size:25.368px;transform:scaleX(1.0387);">№01...</span>
<span class="t" id="t152" style="left:1638.27px;top:396px;font-size:25.368px;transform:scaleX(0.9370);">ТОВ</span>
<svg class="b" style="left:607.5px;top:434.75px" width="20" height="20"><use href="#cb0"/></svg>
<svg class="b" style="left:1240.3px;top:434.75px" width="20" height="20"><use href="#cb1"/></svg>
<span class="t" id="t153" style="left:663.69px;top:433px;font-size:25.368px;transform:scaleX(1.1267);">...</span>
<span class="t" id="t154" style="left:697.05px;top:433px;font-size:25.368px;transform:scaleX(0.9717);">Апт</span>
<span class="t" id="t155" style="left:744.48px;top:433px;font-size:25.368px;transform:scaleX(0.9953);">№012</span>
<span class="t" id="t156" style="left:818.90px;top:433px;font-size:25.368px;letter-spacing:0.173px;transform:scaleX(1.2500);">г....</span>
<span class="t" id="t157" style="left:870.58px;top:433px;font-size:25.368px;transform:scaleX(0.9545);">32468</span>
<span class="t" id="t158" style="left:988.52px;top:433px;font-size:25.368px;transform:scaleX(0.9643);">5225</span>
<span class="t" id="t159" style="left:1335.75px;top:433px;font-size:25.368px;transform:scaleX(0.9861);">Апт</span>
<span class="t" id="t160" style="left:1382.68px;top:433px;font-size:25.368px;transform:scaleX(1.0387);">№01...</span>
<svg class="b" style="left:607.5px;top:472.25px" width="20" height="20"><use href="#cb0"/></svg>
<svg class="b" style="left:1240.3px;top:472.25px" width="20" height="20"><use href="#cb1"/></svg>
<span class="t" id="t161" style="left:663.69px;top:471px;font-size:25.368px;transform:scaleX(1.1267);">...</span>
<span class="t" id="t162" style="left:697.05px;top:471px;font-size:25.368px;transform:scaleX(0.9717);">Апт</span>
<span class="t" id="t163" style="left:744.49px;top:471px;font-size:25.368px;transform:scaleX(0.9921);">№015</span>
<span class="t" id="t164" style="left:818.90px;top:471px;font-size:25.368px;letter-spacing:0.173px;transform:scaleX(1.2500);">г....</span>
<span class="t" id="t165" style="left:870.58px;top:471px;font-size:25.368px;transform:scaleX(0.9540);">34435</span>
<span class="t" id="t166" style="left:988.52px;top:471px;font-size:25.368px;transform:scaleX(0.9652);">5226</span>
<span class="t" id="t167" style="left:1335.75px;top:471px;font-size:25.368px;transform:scaleX(0.9861);">Апт</span>
<span class="t" id="t168" style="left:1382.68px;top:471px;font-size:25.368px;transform:scaleX(1.0387);">№01...</span>
<svg class="b" style="left:607.5px;top:509.75px" width="20" height="20"><use href="#cb0"/></svg>
<svg class="b" style="left:1240.3px;top:509.75px" width="20" height="20"><use href="#cb1"/></svg>
<span class="t" id="t169" style="left:663.69px;top:508px;font-size:25.368px;transform:scaleX(1.1267);">...</span>
<span class="t" id="t170" style="left:697.05px;top:508px;font-size:25.368px;transform:scaleX(0.9717);">Апт</span>
<span class="t" id="t171" style="left:744.48px;top:508px;font-size:25.368px;transform:scaleX(0.9953);">№022</span>
<span class="t" id="t172" style="left:818.90px;top:508px;font-size:25.368px;letter-spacing:0.173px;transform:scaleX(1.2500);">г....</span>
<span class="t" id="t173" style="left:870.58px;top:508px;font-size:25.368px;transform:scaleX(0.9564);">38131</span>
<span class="t" id="t174" style="left:988.52px;top:508px;font-size:25.368px;transform:scaleX(0.9680);">5227</span>
<span class="t" id="t175" style="left:1335.75px;top:508px;font-size:25.368px;transform:scaleX(0.9861);">Апт</span>
<span class="t" id="t176" style="left:1382.68px;top:508px;font-size:25.368px;transform:scaleX(1.0387);">№02...</span>
<span class="t" id="t177" style="left:1638.26px;top:508px;font-size:25.368px;transform:scaleX(0.9475);">ТМН ТАС</span>
<svg class="b" style="left:607.5px;top:547.25px" width="20" height="20"><use href="#cb0"/></svg>
<svg class="b" style="left:1240.3px;top:547.25px" width="20" height="20"><use href="#cb1"/></svg>
<span class="t" id="t178" style="left:663.69px;top:546px;font-size:25.368px;transform:scaleX(1.1267);">...</span>
<span class="t" id="t179" style="left:697.05px;top:546px;font-size:25.368px;transform:scaleX(0.9717);">Апт</span>
<span class="t" id="t180" style="left:744.50px;top:546px;font-size:25.368px;transform:scaleX(0.9873);">№024</span>
<span class="t" id="t181" style="left:818.90px;top:546px;font-size:25.368px;letter-spacing:0.173px;transform:scaleX(1.2500);">г....</span>
<span class="t" id="t182" style="left:988.57px;top:546px;font-size:25.368px;transform:scaleX(0.9643);">3623</span>
<span class="t" id="t183" style="left:1335.75px;top:546px;font-size:25.368px;transform:scaleX(1.0507);">А№24 г....</span>
<svg class="b" style="left:607.5px;top:584.75px" width="20" height="20"><use href="#cb0"/></svg>
<svg class="b" style="left:1240.3px;top:584.75px" width="20" height="20"><use href="#cb1"/></svg>
<span class="t" id="t184" style="left:663.69px;top:583px;font-size:25.368px;transform:scaleX(1.1267);">...</span>
<span class="t" id="t185" style="left:697.05px;top:583px;font-size:25.368px;transform:scaleX(0.9717);">Апт</span>
<span class="t" id="t186" style="left:744.48px;top:583px;font-size:25.368px;transform:scaleX(0.9953);">№027</span>
<span class="t" id="t187" style="left:818.90px;top:583px;font-size:25.368px;letter-spacing:0.173px;transform:scaleX(1.2500);">г....</span>
<span class="t" id="t188" style="left:870.58px;top:583px;font-size:25.368px;transform:scaleX(0.9530);">39450</span>
<span class="t" id="t189" style="left:988.52px;top:583px;font-size:25.368px;transform:scaleX(0.9680);">5252</span>
<span class="t" id="t190" style="left:1335.75px;top:583px;font-size:25.368px;transform:scaleX(0.9861);">Апт</span>
<span class="t" id="t191" style="left:1382.68px;top:583px;font-size:25.368px;transform:scaleX(1.0387);">№02...</span>
<svg class="b" style="left:607.5px;top:622.25px" width="20" height="20"><use href="#cb0"/></svg>
<svg class="b" style="left:1240.3px;top:622.25px" width="20" height="20"><use href="#cb1"/></svg>
<span class="t" id="t192" style="left:663.69px;top:621px;font-size:25.368px;transform:scaleX(1.1267);">...</span>
<span class="t" id="t193" style="left:697.05px;top:621px;font-size:25.368px;transform:scaleX(0.9717);">Апт</span>
<span class="t" id="t194" style="left:744.49px;top:621px;font-size:25.368px;transform:scaleX(0.9927);">№028</span>
<span class="t" id="t195" style="left:818.90px;top:621px;font-size:25.368px;letter-spacing:0.173px;transform:scaleX(1.2500);">г....</span>
<span class="t" id="t196" style="left:870.58px;top:621px;font-size:25.368px;transform:scaleX(0.9547);">39103</span>
<span class="t" id="t197" style="left:988.57px;top:621px;font-size:25.368px;transform:scaleX(0.9577);">3624</span>
<span class="t" id="t198" style="left:1335.75px;top:621px;font-size:25.368px;transform:scaleX(0.9861);">Апт</span>
<span class="t" id="t199" style="left:1382.68px;top:621px;font-size:25.368px;transform:scaleX(1.0387);">№02...</span>
<svg class="b" style="left:607.5px;top:659.75px" width="20" height="20"><use href="#cb0"/></svg>
<svg class="b" style="left:1240.3px;top:659.75px" width="20" height="20"><use href="#cb1"/></svg>
<span class="t" id="t200" style="left:663.69px;top:658px;font-size:25.368px;transform:scaleX(1.1267);">...</span>
<span class="t" id="t201" style="left:697.05px;top:658px;font-size:25.368px;transform:scaleX(0.9717);">Апт</span>
<span class="t" id="t202" style="left:744.48px;top:658px;font-size:25.368px;transform:scaleX(0.9953);">№032</span>
<span class="t" id="t203" style="left:818.90px;top:658px;font-size:25.368px;letter-spacing:0.173px;transform:scaleX(1.2500);">г....</span>
<span class="t" id="t204" style="left:870.58px;top:658px;font-size:25.368px;transform:scaleX(0.9530);">39520</span>
<span class="t" id="t205" style="left:988.52px;top:658px;font-size:25.368px;transform:scaleX(0.9643);">5285</span>
<span class="t" id="t206" style="left:1335.75px;top:658px;font-size:25.368px;transform:scaleX(0.9861);">Апт</span>
<span class="t" id="t207" style="left:1382.68px;top:658px;font-size:25.368px;transform:scaleX(1.0387);">№03...</span>
<svg class="b" style="left:607.5px;top:697.25px" width="20" height="20"><use href="#cb0"/></svg>
<svg class="b" style="left:1240.3px;top:697.25px" width="20" height="20"><use href="#cb1"/></svg>
<span class="t" id="t208" style="left:663.69px;top:696px;font-size:25.368px;transform:scaleX(1.1267);">...</span>
<span class="t" id="t209" style="left:697.05px;top:696px;font-size:25.368px;transform:scaleX(0.9717);">Апт</span>
<span class="t" id="t210" style="left:744.49px;top:696px;font-size:25.368px;transform:scaleX(0.9929);">№033</span>
<span class="t" id="t211" style="left:818.90px;top:696px;font-size:25.368px;letter-spacing:0.173px;transform:scaleX(1.2500);">г....</span>
<span class="t" id="t212" style="left:870.95px;top:696px;font-size:25.368px;transform:scaleX(0.9516);">44447</span>
<span class="t" id="t213" style="left:988.52px;top:696px;font-size:25.368px;transform:scaleX(0.9667);">5229</span>
<span class="t" id="t214" style="left:1335.75px;top:696px;font-size:25.368px;transform:scaleX(0.9861);">Апт</span>
<span class="t" id="t215" style="left:1382.68px;top:696px;font-size:25.368px;transform:scaleX(1.0387);">№03...</span>
<svg class="b" style="left:607.5px;top:734.75px" width="20" height="20"><use href="#cb0"/></svg>
<svg class="b" style="left:1240.3px;top:734.75px" width="20" height="20"><use href="#cb1"/></svg>
<span class="t" id="t216" style="left:663.69px;top:733px;font-size:25.368px;transform:scaleX(1.1267);">...</span>
<span class="t" id="t217" style="left:697.05px;top:733px;font-size:25.368px;transform:scaleX(0.9717);">Апт</span>
<span class="t" id="t218" style="left:744.50px;top:733px;font-size:25.368px;transform:scaleX(0.9873);">№034</span>
<span class="t" id="t219" style="left:818.90px;top:733px;font-size:25.368px;letter-spacing:0.173px;transform:scaleX(1.2500);">г....</span>
<span class="t" id="t220" style="left:870.95px;top:733px;font-size:25.368px;transform:scaleX(0.9477);">44870</span>
<span class="t" id="t221" style="left:988.52px;top:733px;font-size:25.368px;transform:scaleX(0.9630);">5230</span>
<span class="t" id="t222" style="left:1335.75px;top:733px;font-size:25.368px;transform:scaleX(0.9861);">Апт</span>
<span class="t" id="t223" style="left:1382.68px;top:733px;font-size:25.368px;transform:scaleX(1.0387);">№03...</span>
<svg class="b" style="left:607.5px;top:772.25px" width="20" height="20"><use href="#cb0"/></svg>
<svg class="b" style="left:1240.3px;top:772.25px" width="20" height="20"><use href="#cb1"/></svg>
<span class="t" id="t224" style="left:663.69px;top:771px;font-size:25.368px;transform:scaleX(1.1267);">...</span>
<span class="t" id="t225" style="left:697.05px;top:771px;font-size:25.368px;transform:scaleX(0.9717);">Апт</span>
<span class="t" id="t226" style="left:744.49px;top:771px;font-size:25.368px;transform:scaleX(0.9921);">№035</span>
<span class="t" id="t227" style="left:818.90px;top:771px;font-size:25.368px;letter-spacing:0.173px;transform:scaleX(1.2500);">г....</span>
<span class="t" id="t228" style="left:988.57px;top:771px;font-size:25.368px;transform:scaleX(0.9643);">3976</span>
<span class="t" id="t229" style="left:1335.75px;top:771px;font-size:25.368px;transform:scaleX(1.0136);">А№35 г.В...</span>
<svg class="b" style="left:607.5px;top:809.75px" width="20" height="20"><use href="#cb0"/></svg>
<svg class="b" style="left:1240.3px;top:809.75px" width="20" height="20"><use href="#cb1"/></svg>
<span class="t" id="t230" style="left:663.69px;top:808px;font-size:25.368px;transform:scaleX(1.1267);">...</span>
<span class="t" id="t231" style="left:697.05px;top:808px;font-size:25.368px;transform:scaleX(0.9717);">Апт</span>
<span class="t" id="t232" style="left:744.49px;top:808px;font-size:25.368px;transform:scaleX(0.9929);">№036</span>
<span class="t" id="t233" style="left:818.90px;top:808px;font-size:25.368px;letter-spacing:0.173px;transform:scaleX(1.2500);">г....</span>
<span class="t" id="t234" style="left:870.95px;top:808px;font-size:25.368px;transform:scaleX(0.9506);">49029</span>
<span class="t" id="t235" style="left:988.52px;top:808px;font-size:25.368px;transform:scaleX(0.9652);">5253</span>
<span class="t" id="t236" style="left:1335.75px;top:808px;font-size:25.368px;transform:scaleX(0.9861);">Апт</span>
<span class="t" id="t237" style="left:1382.68px;top:808px;font-size:25.368px;transform:scaleX(1.0387);">№03...</span>
<svg class="b" style="left:607.5px;top:847.25px" width="20" height="20"><use href="#cb0"/></svg>
<svg class="b" style="left:1240.3px;top:847.25px" width="20" height="20"><use href="#cb1"/></svg>
<span class="t" id="t238" style="left:663.69px;top:846px;font-size:25.368px;transform:scaleX(1.1267);">...</span>
<span class="t" id="t239" style="left:697.05px;top:846px;font-size:25.368px;transform:scaleX(0.9717);">Апт</span>
<span class="t" id="t240" style="left:744.49px;top:846px;font-size:25.368px;transform:scaleX(0.9910);">№040</span>
<span class="t" id="t241" style="left:818.90px;top:846px;font-size:25.368px;letter-spacing:0.173px;transform:scaleX(1.2500);">г....</span>
<span class="t" id="t242" style="left:870.53px;top:846px;font-size:25.368px;transform:scaleX(0.9554);">51273</span>
<span class="t" id="t243" style="left:988.53px;top:846px;font-size:25.368px;transform:scaleX(0.9586);">5254</span>
<span class="t" id="t244" style="left:1335.75px;top:846px;font-size:25.368px;transform:scaleX(0.9861);">Апт</span>
<span class="t" id="t245" style="left:1382.68px;top:846px;font-size:25.368px;transform:scaleX(1.0387);">№04...</span>
<svg class="b" style="left:607.5px;top:884.75px" width="20" height="20"><use href="#cb0"/></svg>
<svg class="b" style="left:1240.3px;top:884.75px" width="20" height="20"><use href="#cb1"/></svg>
<span class="t" id="t246" style="left:663.69px;top:883px;font-size:25.368px;transform:scaleX(1.1267);">...</span>
<span class="t" id="t247" style="left:697.05px;top:883px;font-size:25.368px;transform:scaleX(0.9717);">Апт</span>
<span class="t" id="t248" style="left:744.48px;top:883px;font-size:25.368px;transform:scaleX(0.9953);">№042</span>
<span class="t" id="t249" style="left:818.90px;top:883px;font-size:25.368px;letter-spacing:0.173px;transform:scaleX(1.2500);">г....</span>
<span class="t" id="t250" style="left:988.94px;top:883px;font-size:25.368px;transform:scaleX(0.9567);">4165</span>
<span class="t" id="t251" style="left:1335.75px;top:883px;font-size:25.368px;transform:scaleX(1.0507);">А№42 г....</span>
<svg class="b" style="left:607.5px;top:922.25px" width="20" height="20"><use href="#cb0"/></svg>
<svg class="b" style="left:1240.3px;top:922.25px" width="20" height="20"><use href="#cb1"/></svg>
<span class="t" id="t252" style="left:663.69px;top:921px;font-size:25.368px;transform:scaleX(1.1267);">...</span>
<span class="t" id="t253" style="left:697.05px;top:921px;font-size:25.368px;transform:scaleX(0.9717);">Апт</span>
<span class="t" id="t254" style="left:744.49px;top:921px;font-size:25.368px;transform:scaleX(0.9929);">№046</span>
<span class="t" id="t255" style="left:818.90px;top:921px;font-size:25.368px;letter-spacing:0.173px;transform:scaleX(1.2500);">г....</span>
<span class="t" id="t256" style="left:870.53px;top:921px;font-size:25.368px;transform:scaleX(0.9566);">54289</span>
<span class="t" id="t257" style="left:988.52px;top:921px;font-size:25.368px;transform:scaleX(0.9680);">5232</span>
<span class="t" id="t258" style="left:1335.75px;top:921px;font-size:25.368px;transform:scaleX(0.9861);">Апт</span>
<span class="t" id="t259" style="left:1382.68px;top:921px;font-size:25.368px;transform:scaleX(1.0387);">№04...</span>
<svg class="b" style="left:607.5px;top:959.75px" width="20" height="20"><use href="#cb0"/></svg>
<svg class="b" style="left:1240.3px;top:959.75px" width="20" height="20"><use href="#cb1"/></svg>
<span class="t" id="t260" style="left:663.69px;top:958px;font-size:25.368px;transform:scaleX(1.1267);">...</span>
<span class="t" id="t261" style="left:697.05px;top:958px;font-size:25.368px;transform:scaleX(0.9717);">Апт</span>
<span class="t" id="t262" style="left:744.49px;top:958px;font-size:25.368px;transform:scaleX(0.9927);">№048</span>
<span class="t" id="t263" style="left:818.90px;top:958px;font-size:25.368px;letter-spacing:0.173px;transform:scaleX(1.2500);">г....</span>
<span class="t" id="t264" style="left:870.53px;top:958px;font-size:25.368px;transform:scaleX(0.9547);">55075</span>
<span class="t" id="t265" style="left:988.52px;top:958px;font-size:25.368px;transform:scaleX(0.9652);">5256</span>
<span class="t" id="t266" style="left:1335.75px;top:958px;font-size:25.368px;transform:scaleX(0.9861);">Апт</span>
<span class="t" id="t267" style="left:1382.68px;top:958px;font-size:25.368px;transform:scaleX(1.0387);">№04...</span>
<svg class="b" style="left:607.5px;top:997.25px" width="20" height="20"><use href="#cb0"/></svg>
<svg class="b" style="left:1240.3px;top:997.25px" width="20" height="20"><use href="#cb1"/></svg>
<span class="t" id="t268" style="left:663.69px;top:996px;font-size:25.368px;transform:scaleX(1.1267);">...</span>
<span class="t" id="t269" style="left:697.05px;top:996px;font-size:25.368px;transform:scaleX(0.9717);">Апт</span>
<span class="t" id="t270" style="left:744.48px;top:996px;font-size:25.368px;transform:scaleX(0.9947);">№051</span>
<span class="t" id="t271" style="left:818.90px;top:996px;font-size:25.368px;letter-spacing:0.173px;transform:scaleX(1.2500);">г....</span>
<span class="t" id="t272" style="left:870.53px;top:996px;font-size:25.368px;transform:scaleX(0.9552);">57998</span>
<span class="t" id="t273" style="left:988.94px;top:996px;font-size:25.368px;transform:scaleX(0.9575);">4436</span>
<span class="t" id="t274" style="left:1335.75px;top:996px;font-size:25.368px;transform:scaleX(0.9861);">Апт</span>
<span class="t" id="t275" style="left:1382.68px;top:996px;font-size:25.368px;transform:scaleX(1.0387);">№05...</span>
<svg class="b" style="left:607.5px;top:1034.75px" width="20" height="20"><use href="#cb0"/></svg>
<svg class="b" style="left:1240.3px;top:1034.75px" width="20" height="20"><use href="#cb1"/></svg>
<span class="t" id="t276" style="left:663.69px;top:1033px;font-size:25.368px;transform:scaleX(1.1267);">...</span>
<span class="t" id="t277" style="left:697.05px;top:1033px;font-size:25.368px;transform:scaleX(0.9717);">Апт</span>
<span class="t" id="t278" style="left:744.48px;top:1033px;font-size:25.368px;transform:scaleX(0.9942);">№059</span>
<span class="t" id="t279" style="left:818.90px;top:1033px;font-size:25.368px;letter-spacing:0.173px;transform:scaleX(1.2500);">г....</span>
<span class="t" id="t280" style="left:870.26px;top:1033px;font-size:25.368px;transform:scaleX(0.9590);">60518</span>
<span class="t" id="t281" style="left:988.52px;top:1033px;font-size:25.368px;transform:scaleX(0.9649);">5258</span>
<span class="t" id="t282" style="left:1335.75px;top:1033px;font-size:25.368px;transform:scaleX(0.9861);">Апт</span>
<span class="t" id="t283" style="left:1382.68px;top:1033px;font-size:25.368px;transform:scaleX(1.0387);">№05...</span>
<svg class="b" style="left:607.5px;top:1072.25px" width="20" height="20"><use href="#cb0"/></svg>
<svg class="b" style="left:1240.3px;top:1072.25px" width="20" height="20"><use href="#cb1"/></svg>
<span class="t" id="t284" style="left:663.69px;top:1071px;font-size:25.368px;transform:scaleX(1.1267);">...</span>
<span class="t" id="t285" style="left:697.05px;top:1071px;font-size:25.368px;transform:scaleX(0.9717);">Апт</span>
<span class="t" id="t286" style="left:744.49px;top:1071px;font-size:25.368px;transform:scaleX(0.9910);">№060</span>
<span class="t" id="t287" style="left:818.90px;top:1071px;font-size:25.368px;letter-spacing:0.173px;transform:scaleX(1.2500);">г....</span>
<span class="t" id="t288" style="left:870.26px;top:1071px;font-size:25.368px;transform:scaleX(0.9615);">60362</span>
<span class="t" id="t289" style="left:988.52px;top:1071px;font-size:25.368px;transform:scaleX(0.9667);">5259</span>
<span class="t" id="t290" style="left:1335.75px;top:1071px;font-size:25.368px;transform:scaleX(0.9861);">Апт</span>
<span class="t" id="t291" style="left:1382.68px;top:1071px;font-size:25.368px;transform:scaleX(1.0387);">№06...</span>
<svg class="b" style="left:607.5px;top:1109.75px" width="20" height="20"><use href="#cb0"/></svg>
<svg class="b" style="left:1240.3px;top:1109.75px" width="20" height="20"><use href="#cb1"/></svg>
<span class="t" id="t292" style="left:663.69px;top:1108px;font-size:25.368px;transform:scaleX(1.1267);">...</span>
<span class="t" id="t293" style="left:697.05px;top:1108px;font-size:25.368px;transform:scaleX(0.9717);">Апт</span>
<span class="t" id="t294" style="left:744.48px;top:1108px;font-size:25.368px;transform:scaleX(0.9953);">№062</span>
<span class="t" id="t295" style="left:818.90px;top:1108px;font-size:25.368px;letter-spacing:0.173px;transform:scaleX(1.2500);">г....</span>
<span class="t" id="t296" style="left:870.27px;top:1108px;font-size:25.368px;transform:scaleX(0.9585);">61565</span>
<span class="t" id="t297" style="left:988.52px;top:1108px;font-size:25.368px;transform:scaleX(0.9630);">5260</span>
<span class="t" id="t298" style="left:1335.75px;top:1108px;font-size:25.368px;transform:scaleX(0.9861);">Апт</span>
<span class="t" id="t299" style="left:1382.68px;top:1108px;font-size:25.368px;transform:scaleX(1.0387);">№06...</span>
<svg class="b" style="left:607.5px;top:1147.25px" width="20" height="20"><use href="#cb0"/></svg>
<svg class="b" style="left:1240.3px;top:1147.25px" width="20" height="20"><use href="#cb1"/></svg>
<span class="t" id="t300" style="left:663.69px;top:1146px;font-size:25.368px;transform:scaleX(1.1267);">...</span>
<span class="t" id="t301" style="left:697.05px;top:1146px;font-size:25.368px;transform:scaleX(0.9717);">Апт</span>
<span class="t" id="t302" style="left:744.49px;top:1146px;font-size:25.368px;transform:scaleX(0.9921);">№065</span>
<span class="t" id="t303" style="left:818.90px;top:1146px;font-size:25.368px;letter-spacing:0.173px;transform:scaleX(1.2500);">г....</span>
<span class="t" id="t304" style="left:870.26px;top:1146px;font-size:25.368px;transform:scaleX(0.9592);">64776</span>
<span class="t" id="t305" style="left:988.53px;top:1146px;font-size:25.368px;transform:scaleX(0.9586);">5244</span>
<span class="t" id="t306" style="left:1335.75px;top:1146px;font-size:25.368px;transform:scaleX(0.9861);">Апт</span>
<span class="t" id="t307" style="left:1382.68px;top:1146px;font-size:25.368px;transform:scaleX(1.0387);">№06...</span>
<svg class="b" style="left:607.5px;top:1184.75px" width="20" height="20"><use href="#cb0"/></svg>
<svg class="b" style="left:1240.3px;top:1184.75px" width="20" height="20"><use href="#cb1"/></svg>
<span class="t" id="t308" style="left:663.69px;top:1183px;font-size:25.368px;transform:scaleX(1.1267);">...</span>
<span class="t" id="t309" style="left:697.05px;top:1183px;font-size:25.368px;transform:scaleX(0.9717);">Апт</span>
<span class="t" id="t310" style="left:744.49px;top:1183px;font-size:25.368px;transform:scaleX(0.9910);">№070</span>
<span class="t" id="t311" style="left:818.90px;top:1183px;font-size:25.368px;letter-spacing:0.173px;transform:scaleX(1.2500);">г....</span>
<span class="t" id="t312" style="left:870.27px;top:1183px;font-size:25.368px;transform:scaleX(0.9585);">64415</span>
<span class="t" id="t313" style="left:988.94px;top:1183px;font-size:25.368px;transform:scaleX(0.9575);">4726</span>
<span class="t" id="t314" style="left:1335.75px;top:1183px;font-size:25.368px;transform:scaleX(0.9861);">Апт</span>
<span class="t" id="t315" style="left:1382.68px;top:1183px;font-size:25.368px;transform:scaleX(1.0387);">№07...</span>
<div class="c" style="left:600px;top:1214.65px;width:700px;height:22.55px">
<svg class="b" style="left:7.5px;top:7.6px" width="20" height="20"><use href="#cb0"/></svg>
<svg class="b" style="left:640.3px;top:7.6px" width="20" height="20"><use href="#cb1"/></svg>
</div>
<div class="c" style="left:693px;top:1214.65px;width:173px;height:22.55px"><span class="t" id="t316" style="left:4.05px;top:6.35px;font-size:25.368px;transform:scaleX(0.9717);">Апт</span></div>
<div class="c" style="left:693px;top:1214.65px;width:173px;height:22.55px"><span class="t" id="t317" style="left:51.49px;top:6.35px;font-size:25.368px;transform:scaleX(0.9929);">№073</span></div>
<div class="c" style="left:693px;top:1214.65px;width:173px;height:22.55px"><span class="t" id="t318" style="left:125.90px;top:6.35px;font-size:25.368px;letter-spacing:0.173px;transform:scaleX(1.2500);">г....</span></div>
<div class="c" style="left:867px;top:1214.65px;width:117px;height:22.55px"><span class="t" id="t319" style="left:3.26px;top:6.35px;font-size:25.368px;transform:scaleX(0.9604);">65609</span></div>
<div class="c" style="left:985px;top:1214.65px;width:185px;height:22.55px"><span class="t" id="t320" style="left:3.52px;top:6.35px;font-size:25.368px;transform:scaleX(0.9649);">5278</span></div>
<div class="c" style="left:1332px;top:1214.65px;width:138px;height:22.55px"><span class="t" id="t321" style="left:3.75px;top:6.35px;font-size:25.368px;transform:scaleX(0.9861);">Апт</span></div>
<div class="c" style="left:1332px;top:1214.65px;width:138px;height:22.55px"><span class="t" id="t322" style="left:50.68px;top:6.35px;font-size:25.368px;transform:scaleX(1.0387);">№07...</span></div>
<div class="b" style="left:558px;top:1240px;width:1253.3px;height:41.5px;background:#eeeeee;"></div>
<div class="b" style="left:579px;top:1242.5px;width:80.5px;height:35.5px;background:#e5e7e7;box-sizing:border-box;border:1px solid #d9dbdb;"></div>
<div class="b" style="left:694.5px;top:1242.5px;width:170.5px;height:35.5px;background:#e5e7e7;box-sizing:border-box;border:1px solid #d9dbdb;"></div>
<span class="t" id="t323" style="left:641.88px;top:1249px;font-size:25.368px;">0</span>
<span class="t" id="t324" style="left:698.52px;top:1249px;font-size:25.368px;transform:scaleX(0.9388);">Запис 2 з 151</span>
<svg class="b" style="left:0;top:0" width="2156" height="1326"><rect x="574.75" y="211" width="1.5" height="29" fill="#e2e2e2"/><rect x="660.25" y="211" width="1.5" height="29" fill="#e2e2e2"/><rect x="691.45" y="211" width="1.5" height="29" fill="#e2e2e2"/><rect x="865.25" y="211" width="1.5" height="29" fill="#e2e2e2"/><rect x="983.65" y="211" width="1.5" height="29" fill="#e2e2e2"/><rect x="1169.85" y="211" width="1.5" height="29" fill="#e2e2e2"/><rect x="1330.55" y="211" width="1.5" height="29" fill="#e2e2e2"/><rect x="1469.75" y="211" width="1.5" height="29" fill="#e2e2e2"/><rect x="1633.25" y="211" width="1.5" height="29" fill="#e2e2e2"/><rect x="574.75" y="239.65" width="1.5" height="999.15" fill="#a6a6a6"/><rect x="660.25" y="239.65" width="1.5" height="999.15" fill="#a6a6a6"/><rect x="691.45" y="239.65" width="1.5" height="999.15" fill="#a6a6a6"/><rect x="865.25" y="239.65" width="1.5" height="999.15" fill="#a6a6a6"/><rect x="983.65" y="239.65" width="1.5" height="999.15" fill="#a6a6a6"/><rect x="1169.85" y="239.65" width="1.5" height="999.15" fill="#a6a6a6"/><rect x="1330.55" y="239.65" width="1.5" height="999.15" fill="#a6a6a6"/><rect x="1469.75" y="239.65" width="1.5" height="999.15" fill="#a6a6a6"/><rect x="1633.25" y="239.65" width="1.5" height="999.15" fill="#a6a6a6"/><rect x="1810.55" y="239.65" width="1.5" height="999.15" fill="#a6a6a6"/><rect x="558" y="275.7" width="1254.05" height="1.5" fill="#a6a6a6"/><rect x="558" y="313.2" width="1254.05" height="1.5" fill="#a6a6a6"/><rect x="558" y="350.7" width="1254.05" height="1.5" fill="#a6a6a6"/><rect x="558" y="388.2" width="1254.05" height="1.5" fill="#a6a6a6"/><rect x="558" y="425.7" width="1254.05" height="1.5" fill="#a6a6a6"/><rect x="558" y="463.2" width="1254.05" height="1.5" fill="#a6a6a6"/><rect x="558" y="500.7" width="1254.05" height="1.5" fill="#a6a6a6"/><rect x="558" y="538.2" width="1254.05" height="1.5" fill="#a6a6a6"/><rect x="558" y="575.7" width="1254.05" height="1.5" fill="#a6a6a6"/><rect x="558" y="613.2" width="1254.05" height="1.5" fill="#a6a6a6"/><rect x="558" y="650.7" width="1254.05" height="1.5" fill="#a6a6a6"/><rect x="558" y="688.2" width="1254.05" height="1.5" fill="#a6a6a6"/><rect x="558" y="725.7" width="1254.05" height="1.5" fill="#a6a6a6"/><rect x="558" y="763.2" width="1254.05" height="1.5" fill="#a6a6a6"/><rect x="558" y="800.7" width="1254.05" height="1.5" fill="#a6a6a6"/><rect x="558" y="838.2" width="1254.05" height="1.5" fill="#a6a6a6"/><rect x="558" y="875.7" width="1254.05" height="1.5" fill="#a6a6a6"/><rect x="558" y="913.2" width="1254.05" height="1.5" fill="#a6a6a6"/><rect x="558" y="950.7" width="1254.05" height="1.5" fill="#a6a6a6"/><rect x="558" y="988.2" width="1254.05" height="1.5" fill="#a6a6a6"/><rect x="558" y="1025.7" width="1254.05" height="1.5" fill="#a6a6a6"/><rect x="558" y="1063.2" width="1254.05" height="1.5" fill="#a6a6a6"/><rect x="558" y="1100.7" width="1254.05" height="1.5" fill="#a6a6a6"/><rect x="558" y="1138.2" width="1254.05" height="1.5" fill="#a6a6a6"/><rect x="558" y="1175.7" width="1254.05" height="1.5" fill="#a6a6a6"/><rect x="558" y="1213.2" width="1254.05" height="1.5" fill="#a6a6a6"/><rect x="558" y="1237.6" width="1254.05" height="2.6" fill="#8e8e8e"/><rect x="574.7" y="1239.8" width="1.5" height="43" fill="#a6a6a6"/><rect x="1810.5" y="1239.8" width="1.5" height="44" fill="#a6a6a6"/><rect x="558" y="1280.8" width="1254.05" height="1.5" fill="#a6a6a6"/></svg>
<div class="b" style="left:0px;top:1282px;width:2156px;height:44px;background:#efefef;"></div>
<div class="b" style="left:0px;top:1322.5px;width:2156px;height:1.5px;background:#dcdcdc;"></div>
<div class="b" style="left:5px;top:1286px;width:186.5px;height:33.5px;background:#efefef;"></div>
<span class="t" id="t325" style="left:8.25px;top:1295px;font-size:16.912px;transform:scaleX(0.9738);color:#111;">Головна</span>
<div class="b" style="left:195px;top:1286px;width:187.5px;height:33.5px;background:#ffd0a4;"></div>
<svg class="b" style="left:0;top:0" width="2156" height="1326"><rect x="6" y="1287" width="184.8" height="31.7" fill="none" stroke="#151515" stroke-width="2"/><rect x="195.95" y="1286.95" width="185.6" height="31.6" fill="none" stroke="#2f87dc" stroke-width="1.9"/></svg>
<span class="t" id="t326" style="left:199.47px;top:1295px;font-size:16.912px;transform:scaleX(0.9428);color:#111;">Асортимент</span>
<span class="t" id="t327" style="left:292.47px;top:1295px;font-size:16.912px;transform:scaleX(0.9627);color:#111;">матриці</span>
<span class="t" id="t328" style="left:358.47px;top:1295px;font-size:16.912px;letter-spacing:0.737px;transform:scaleX(1.2500);color:#111;">...</span>
</body></html>
